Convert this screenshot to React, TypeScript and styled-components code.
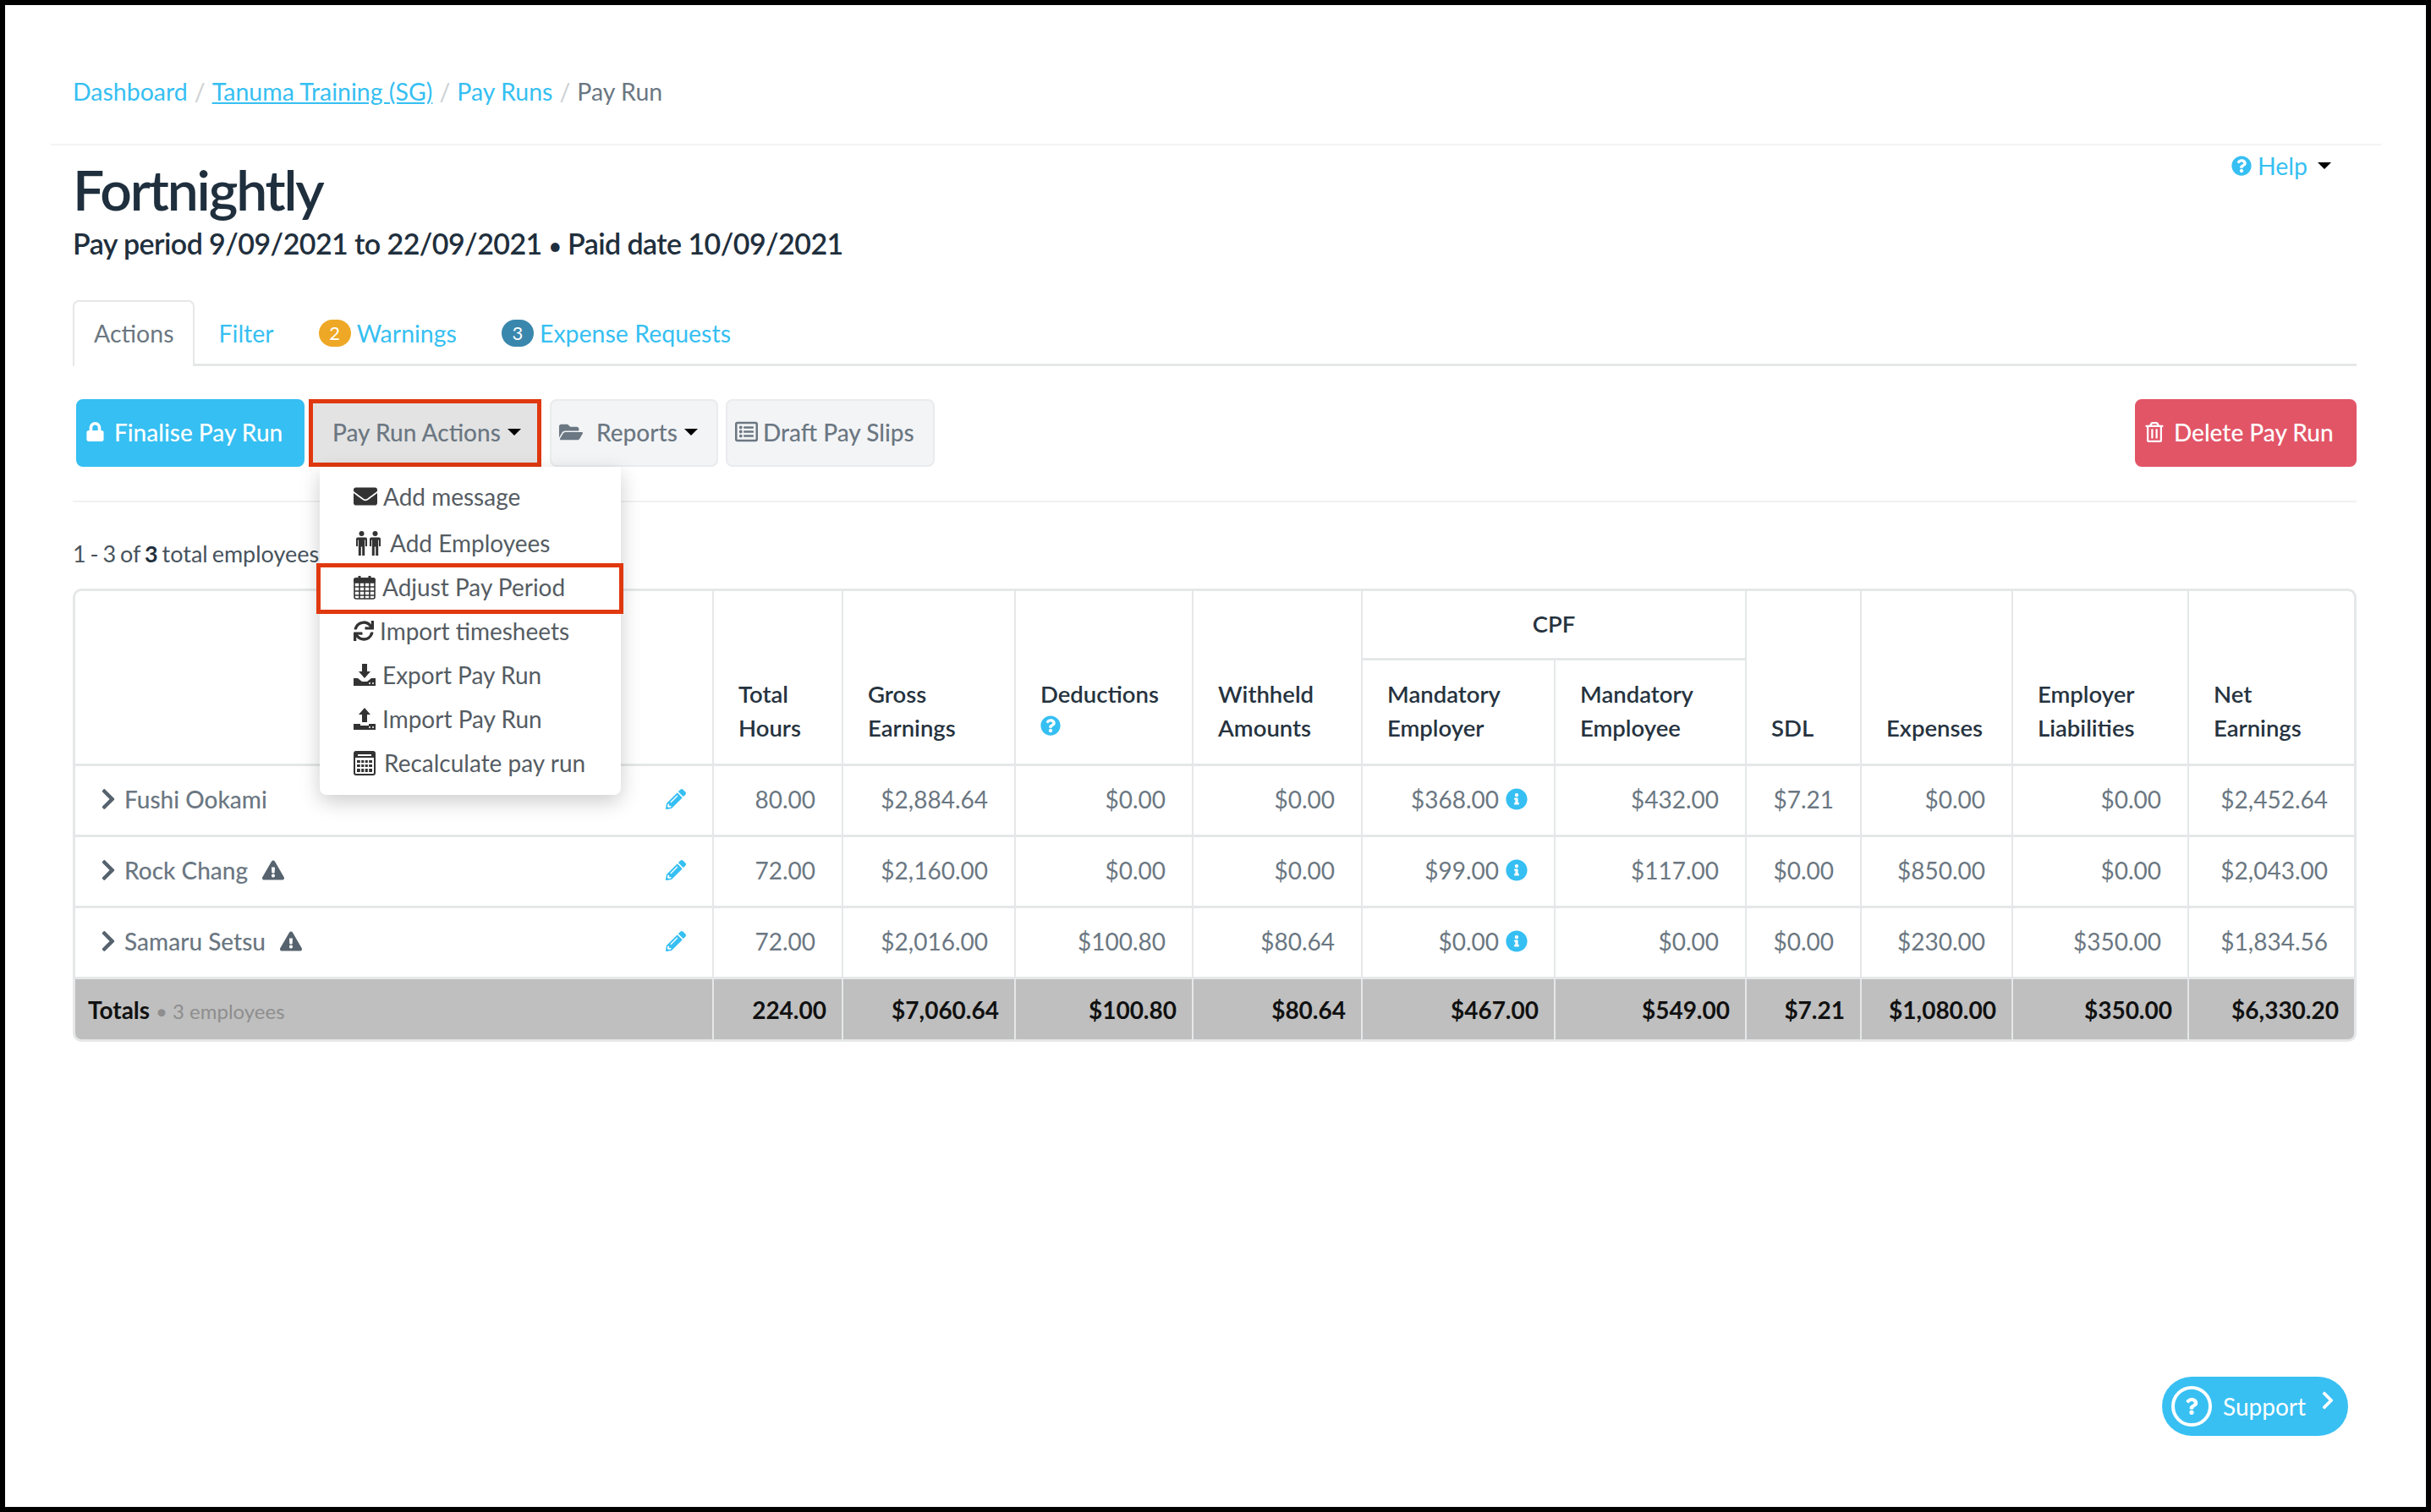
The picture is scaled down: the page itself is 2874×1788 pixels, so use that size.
import styled, { createGlobalStyle } from 'styled-components';
import {
  FaChevronRight,
  FaEnvelope,
  FaExclamationTriangle,
  FaFolderOpen,
  FaInfoCircle,
  FaLock,
  FaPencilAlt,
  FaQuestion,
  FaQuestionCircle,
  FaRegListAlt,
  FaRegTrashAlt,
  FaSync,
} from 'react-icons/fa';

const FONT = `Lato, "Open Sans", "Liberation Sans", sans-serif`;
const BLUE = '#36bff2';
const GREY = '#6b7782';
const LINE = '#e5e7e8';
const RED = '#e0380f';

const GlobalStyle = createGlobalStyle`
  * { box-sizing: border-box; }
  body {
    margin: 0;
    background: #000;
    font-family: ${FONT};
    font-size: 28px;
    color: ${GREY};
  }
`;

const Frame = styled.div`
  position: relative;
  width: 2874px;
  height: 1788px;
  border: 6px solid #000;
  background: #fff;
  padding: 87px 82px 0 80px;
`;

const Breadcrumb = styled.nav`
  display: flex;
  align-items: center;
  height: 30px;
  margin-bottom: 47px;
  font-size: 28.5px;
`;

const Crumb = styled.a<{ $underline?: boolean }>`
  color: ${BLUE};
  text-decoration: ${(p) => (p.$underline ? 'underline' : 'none')};
`;

const CrumbSep = styled.span`
  margin: 0 8px;
  color: #ccd0d3;
`;

const CrumbCurrent = styled.span`
  color: ${GREY};
`;

const PageHeader = styled.header`
  display: flex;
  justify-content: space-between;
  margin: 0 -29px 0 -26px;
  padding: 17px 59px 0 26px;
  border-top: 2px solid #f3f3f3;
`;

const Title = styled.h1`
  margin: 0 0 9px;
  font-size: 66px;
  line-height: 70px;
  font-weight: 600;
  color: #1f2f3d;
  letter-spacing: -2.2px;
`;

const SubTitle = styled.h2`
  margin: 0;
  font-size: 34px;
  line-height: 40px;
  font-weight: 600;
  color: #1f2f3d;
  letter-spacing: -0.58px;
`;

const Bullet = styled.span`
  font-size: 26px;
  line-height: 1;
`;

const Help = styled.a`
  display: flex;
  align-items: center;
  align-self: flex-start;
  height: 30px;
  margin-top: -8px;
  color: ${BLUE};
  font-size: 28.5px;
  svg { margin-right: 7px; font-size: 24px; }
`;

const Caret = styled.span<{ $left?: number }>`
  display: inline-block;
  width: 0;
  height: 0;
  margin-left: ${(p) => p.$left ?? 8}px;
  border-top: 8px solid #000;
  border-left: 8px solid transparent;
  border-right: 8px solid transparent;
`;

const Tabs = styled.ul`
  display: flex;
  align-items: flex-end;
  margin: 50px 0 39px;
  padding: 0;
  list-style: none;
  height: 75px;
  border-bottom: 3px solid ${LINE};
`;

const Tab = styled.li<{ $active?: boolean; $pad: string }>`
  display: flex;
  align-items: center;
  height: 78px;
  margin-bottom: -3px;
  padding: ${(p) => p.$pad};
  font-size: 28.5px;
  color: ${(p) => (p.$active ? GREY : BLUE)};
  background: ${(p) => (p.$active ? '#fff' : 'transparent')};
  border: 2px solid ${(p) => (p.$active ? LINE : 'transparent')};
  border-bottom: 0;
  border-radius: 7px 7px 0 0;
`;

const Badge = styled.span<{ $bg: string }>`
  display: inline-flex;
  align-items: center;
  justify-content: center;
  width: 38px;
  height: 32px;
  margin-right: 7px;
  border-radius: 16px;
  background: ${(p) => p.$bg};
  color: #fff;
  font-size: 22px;
`;

const Toolbar = styled.div`
  display: flex;
  align-items: stretch;
  height: 80px;
  padding-left: 4px;
`;

const Button = styled.button<{ $w: number; $kind?: 'primary' | 'danger' | 'active' }>`
  display: flex;
  align-items: center;
  width: ${(p) => p.$w}px;
  height: 80px;
  padding: 0 9px 3px;
  font-family: ${FONT};
  font-size: 28px;
  font-weight: 500;
  border-radius: 8px;
  color: ${(p) => (p.$kind === 'primary' || p.$kind === 'danger' ? '#fff' : GREY)};
  background: ${(p) =>
    p.$kind === 'primary' ? BLUE : p.$kind === 'danger' ? '#e25567' : p.$kind === 'active' ? '#e3e3e3' : '#f3f4f6'};
  border: 2px solid ${(p) =>
    p.$kind === 'primary' ? BLUE : p.$kind === 'danger' ? '#e25567' : '#e9ebed'};
`;

const ActionsButton = styled(Button)`
  border: 5px solid ${RED};
  border-radius: 0;
  padding-left: 23px;
`;

const ActionsGroup = styled.div`
  position: relative;
  margin: 0 10px 0 5px;
`;

const DraftWrap = styled.div`
  margin-left: 9px;
`;

const DeleteWrap = styled.div`
  margin-left: auto;
`;

const BtnIcon = styled.span<{ $gap: number; $size: number }>`
  display: inline-flex;
  margin-right: ${(p) => p.$gap}px;
  font-size: ${(p) => p.$size}px;
`;

const Menu = styled.ul`
  position: absolute;
  top: 100%;
  left: 13px;
  z-index: 5;
  width: 356px;
  margin: 0;
  padding: 10px 0 11px;
  list-style: none;
  background: #fff;
  border-radius: 0 0 8px 8px;
  box-shadow: 0 8px 24px rgba(0, 0, 0, 0.2);
`;

const MenuItem = styled.li<{ $boxed?: boolean; $top?: number }>`
  position: relative;
  display: flex;
  align-items: center;
  height: 52px;
  margin-top: ${(p) => p.$top ?? 0}px;
  padding: 0 0 2px 40px;
  font-size: 28px;
  color: #555c63;
  &::after {
    content: ${(p) => (p.$boxed ? '""' : 'none')};
    position: absolute;
    inset: -3px -3px -5px -4px;
    border: 5px solid ${RED};
  }
`;

const MenuIcon = styled.span<{ $w: number }>`
  display: inline-flex;
  align-items: center;
  width: ${(p) => p.$w}px;
  color: #333;
  svg { display: block; flex: none; }
`;

const Rule = styled.hr`
  margin: 40px 0 46px;
  border: 0;
  border-top: 2px solid #f1f1f1;
`;

const Count = styled.div`
  height: 30px;
  line-height: 30px;
  margin-bottom: 26px;
  font-size: 27px;
  word-spacing: -2px;
  color: #47535d;
  b { color: #1f2f3d; }
`;

const TableWrap = styled.div`
  width: 2700px;
  border: 3px solid ${LINE};
  border-radius: 10px;
  overflow: hidden;
`;

const Table = styled.table`
  width: 100%;
  table-layout: fixed;
  border-collapse: separate;
  border-spacing: 0;
`;

const Th = styled.th<{ $center?: boolean }>`
  padding: 0 10px 22px 29px;
  height: 122px;
  vertical-align: bottom;
  text-align: ${(p) => (p.$center ? 'center' : 'left')};
  font-size: 27.5px;
  font-weight: 600;
  line-height: 40px;
  color: #26333f;
  border-left: 2px solid ${LINE};
  &:first-child { border-left: 0; }
`;

const SubTh = styled(Th)`
  &:first-child { border-left: 2px solid ${LINE}; }
`;

const GroupTh = styled(Th)`
  height: 82px;
  padding: 0 0 2px;
  vertical-align: middle;
  border-bottom: 3px solid ${LINE};
`;

const Td = styled.td`
  height: 84px;
  padding: 0 31px 3px 10px;
  text-align: right;
  font-size: 28px;
  color: ${GREY};
  border-top: 3px solid ${LINE};
  border-left: 2px solid ${LINE};
  &:first-child { border-left: 0; }
`;

const NameCell = styled.div`
  display: flex;
  align-items: center;
  padding-left: 15px;
  font-weight: 500;
  color: ${GREY};
`;

const Chevron = styled.span`
  display: inline-flex;
  width: 33px;
  font-size: 28px;
  color: #56636e;
`;

const Warn = styled.span`
  display: inline-flex;
  margin-left: 17px;
  font-size: 26px;
  color: #56636e;
`;

const Pencil = styled.span`
  display: inline-flex;
  margin-left: auto;
  font-size: 24px;
  color: ${BLUE};
`;

const ValueWithInfo = styled.span`
  display: inline-flex;
  align-items: center;
  justify-content: flex-end;
  svg { margin-left: 8px; font-size: 26px; color: ${BLUE}; }
`;

const TotalCell = styled.td`
  height: 74px;
  padding: 0 18px 0 4px;
  text-align: right;
  font-size: 28px;
  font-weight: 700;
  color: #111;
  background: #bfbfbf;
  border-top: 3px solid ${LINE};
  border-left: 2px solid ${LINE};
  &:first-child { border-left: 0; padding-left: 15px; text-align: left; }
  small { font-size: 24px; font-weight: 400; color: #8e8e8e; }
`;

const HeadInfo = styled.span`
  display: block;
  height: 40px;
  color: ${BLUE};
  font-size: 24px;
`;

const Support = styled.a`
  position: absolute;
  left: 2550px;
  top: 1622px;
  display: flex;
  align-items: center;
  width: 220px;
  height: 70px;
  padding-left: 11px;
  border-radius: 35px;
  background: #38c0f3;
  color: #fff;
  font-size: 28px;
`;

const SupportRing = styled.span`
  display: inline-flex;
  align-items: center;
  justify-content: center;
  width: 48px;
  height: 48px;
  margin-right: 13px;
  border: 4px solid #fff;
  border-radius: 50%;
  font-size: 20px;
`;

const SupportArrow = styled.span`
  position: absolute;
  right: 12px;
  top: 16px;
  display: inline-flex;
  font-size: 24px;
`;

const MenPairIcon = () => (
  <svg width="33" height="29" viewBox="0 0 33 29" fill="#333">
    <circle cx="9.5" cy="3" r="3" />
    <circle cx="25.5" cy="3" r="3" />
    <path d="M5 7.5h9a2 2 0 0 1 2 2V18h-2v-7.5h-.8V29h-3V18.5h-1.4V29h-3V10.5H5V18H3V9.5a2 2 0 0 1 2-2z" />
    <path d="M21 7.5h9a2 2 0 0 1 2 2V18h-2v-7.5h-.8V29h-3V18.5h-1.4V29h-3V10.5H21V18h-2V9.5a2 2 0 0 1 2-2z" />
  </svg>
);

const CalendarIcon = () => (
  <svg width="26" height="29" viewBox="0 0 26 29" fill="none" stroke="#333" strokeWidth="1.6">
    <rect x="1" y="4" width="24" height="24" rx="2" />
    <rect x="1" y="4" width="24" height="5" rx="1" fill="#333" />
    <path d="M1 14h24M1 19h24M1 24h24M7 9v19M13 9v19M19 9v19" />
    <path d="M7 1v6M19 1v6" strokeWidth="3" />
  </svg>
);

const CalculatorIcon = () => (
  <svg width="26" height="29" viewBox="0 0 26 29" fill="none">
    <rect x="1" y="1" width="24" height="27" rx="2" stroke="#333" strokeWidth="2" />
    <rect x="1" y="1" width="24" height="7" fill="#333" />
    <rect x="5" y="4" width="16" height="2" fill="#fff" />
    <path d="M4 11h18v3H4zM4 16h18v3H4zM4 21h18v4H4z" fill="#333" />
    <path d="M8.5 10v16M13 10v16M17.5 10v16" stroke="#fff" strokeWidth="1.4" />
  </svg>
);

const TrayArrowIcon = ({ up }: { up?: boolean }) => (
  <svg width="26" height="26" viewBox="0 0 26 26" fill="#333">
    <path d={up ? 'M13 0l7 8h-4v9h-6V8H6z' : 'M10 0h6v9h4l-7 8-7-8h4z'} />
    <path d={up ? 'M0 19h8v2h10v-2h8v7H0z' : 'M0 17h5l5 4h6l5-4h5v9H0z'} />
    <circle cx="19" cy="23" r="1" fill="#fff" />
    <circle cx="23" cy="23" r="1" fill="#fff" />
  </svg>
);

const columns = [753, 153, 204, 210, 200, 228, 226, 136, 179, 208, 197];

const rows = [
  { name: 'Fushi Ookami', warn: false, cells: ['80.00', '$2,884.64', '$0.00', '$0.00', '$368.00', '$432.00', '$7.21', '$0.00', '$0.00', '$2,452.64'] },
  { name: 'Rock Chang', warn: true, cells: ['72.00', '$2,160.00', '$0.00', '$0.00', '$99.00', '$117.00', '$0.00', '$850.00', '$0.00', '$2,043.00'] },
  { name: 'Samaru Setsu', warn: true, cells: ['72.00', '$2,016.00', '$100.80', '$80.64', '$0.00', '$0.00', '$0.00', '$230.00', '$350.00', '$1,834.56'] },
];

const totals = ['224.00', '$7,060.64', '$100.80', '$80.64', '$467.00', '$549.00', '$7.21', '$1,080.00', '$350.00', '$6,330.20'];

const App = () => {
  return (
    <Frame>
      <GlobalStyle />
      <Breadcrumb>
        <Crumb>Dashboard</Crumb>
        <CrumbSep>/</CrumbSep>
        <Crumb $underline>Tanuma Training (SG)</Crumb>
        <CrumbSep>/</CrumbSep>
        <Crumb>Pay Runs</Crumb>
        <CrumbSep>/</CrumbSep>
        <CrumbCurrent>Pay Run</CrumbCurrent>
      </Breadcrumb>

      <PageHeader>
        <div>
          <Title>Fortnightly</Title>
          <SubTitle>Pay period 9/09/2021 to 22/09/2021 <Bullet>•</Bullet> Paid date 10/09/2021</SubTitle>
        </div>
        <Help>
          <FaQuestionCircle />
          Help
          <Caret $left={12} />
        </Help>
      </PageHeader>

      <Tabs>
        <Tab $active $pad="0 23px 3px">Actions</Tab>
        <Tab $pad="0 26px 3px">Filter</Tab>
        <Tab $pad="0 23px 3px"><Badge $bg="#eea825">2</Badge>Warnings</Tab>
        <Tab $pad="0 0 3px 26px"><Badge $bg="#3a87ad">3</Badge>Expense Requests</Tab>
      </Tabs>

      <Toolbar>
        <Button $w={270} $kind="primary">
          <BtnIcon $gap={11} $size={23}><FaLock /></BtnIcon>
          Finalise Pay Run
        </Button>
        <ActionsGroup>
          <ActionsButton $w={275} $kind="active">
            Pay Run Actions
            <Caret />
          </ActionsButton>
          <Menu>
            <MenuItem>
              <MenuIcon $w={35}><FaEnvelope size={28} /></MenuIcon>Add message
            </MenuItem>
            <MenuItem $top={3}>
              <MenuIcon $w={43}><MenPairIcon /></MenuIcon>Add Employees
            </MenuItem>
            <MenuItem $boxed>
              <MenuIcon $w={34}><CalendarIcon /></MenuIcon>Adjust Pay Period
            </MenuItem>
            <MenuItem>
              <MenuIcon $w={31}><FaSync size={24} /></MenuIcon>Import timesheets
            </MenuItem>
            <MenuItem>
              <MenuIcon $w={34}><TrayArrowIcon /></MenuIcon>Export Pay Run
            </MenuItem>
            <MenuItem>
              <MenuIcon $w={34}><TrayArrowIcon up /></MenuIcon>Import Pay Run
            </MenuItem>
            <MenuItem>
              <MenuIcon $w={36}><CalculatorIcon /></MenuIcon>Recalculate pay run
            </MenuItem>
          </Menu>
        </ActionsGroup>
        <Button $w={199}>
          <BtnIcon $gap={16} $size={28}><FaFolderOpen /></BtnIcon>
          Reports
          <Caret />
        </Button>
        <DraftWrap>
          <Button $w={247}>
            <BtnIcon $gap={6} $size={27}><FaRegListAlt /></BtnIcon>
            Draft Pay Slips
          </Button>
        </DraftWrap>
        <DeleteWrap>
          <Button $w={262} $kind="danger">
            <BtnIcon $gap={11} $size={24}><FaRegTrashAlt /></BtnIcon>
            Delete Pay Run
          </Button>
        </DeleteWrap>
      </Toolbar>

      <Rule />

      <Count>1 - 3 of <b>3</b> total employees</Count>

      <TableWrap>
        <Table>
          <colgroup>
            {columns.map((w, i) => (
              <col key={i} width={w} />
            ))}
          </colgroup>
          <thead>
            <tr>
              <Th rowSpan={2} />
              <Th rowSpan={2}>Total<br />Hours</Th>
              <Th rowSpan={2}>Gross<br />Earnings</Th>
              <Th rowSpan={2}>Deductions<HeadInfo><FaQuestionCircle /></HeadInfo></Th>
              <Th rowSpan={2}>Withheld<br />Amounts</Th>
              <GroupTh colSpan={2} $center>CPF</GroupTh>
              <Th rowSpan={2}>SDL</Th>
              <Th rowSpan={2}>Expenses</Th>
              <Th rowSpan={2}>Employer<br />Liabilities</Th>
              <Th rowSpan={2}>Net<br />Earnings</Th>
            </tr>
            <tr>
              <SubTh>Mandatory<br />Employer</SubTh>
              <Th>Mandatory<br />Employee</Th>
            </tr>
          </thead>
          <tbody>
            {rows.map((row) => (
              <tr key={row.name}>
                <Td>
                  <NameCell>
                    <Chevron><FaChevronRight /></Chevron>
                    {row.name}
                    {row.warn && <Warn><FaExclamationTriangle /></Warn>}
                    <Pencil><FaPencilAlt /></Pencil>
                  </NameCell>
                </Td>
                {row.cells.map((c, i) => (
                  <Td key={i}>
                    {i === 4 ? <ValueWithInfo>{c}<FaInfoCircle /></ValueWithInfo> : c}
                  </Td>
                ))}
              </tr>
            ))}
            <tr>
              <TotalCell>Totals <small>• 3 employees</small></TotalCell>
              {totals.map((t, i) => (
                <TotalCell key={i}>{t}</TotalCell>
              ))}
            </tr>
          </tbody>
        </Table>
      </TableWrap>

      <Support>
        <SupportRing><FaQuestion /></SupportRing>
        Support
        <SupportArrow><FaChevronRight /></SupportArrow>
      </Support>
    </Frame>
  );
};

export default App;
